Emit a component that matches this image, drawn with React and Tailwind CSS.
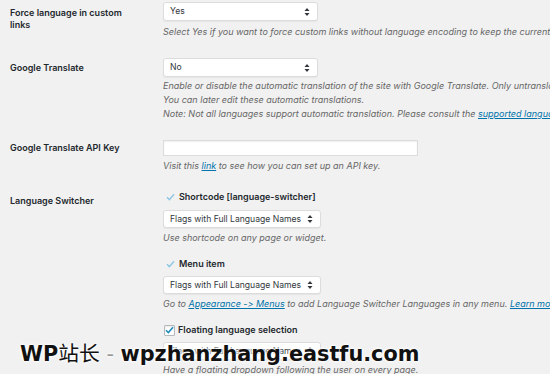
import React from "react";

const font = { fontFamily: "Inter, 'Liberation Sans', sans-serif", fontFeatureSettings: "'calt' 0" };

function Arrows() {
  return (
    <svg width="6" height="9" viewBox="0 0 6 9" className="absolute right-[7px] top-1/2 -translate-y-1/2">
      <path d="M0.5 3.5 L3 0.5 L5.5 3.5 Z" fill="#32373c" />
      <path d="M0.5 5.5 L3 8.5 L5.5 5.5 Z" fill="#32373c" />
    </svg>
  );
}

function Select({ value, width, height = "h-[19px]" }) {
  return (
    <div
      className={`relative ${width} ${height} bg-white border border-[#dcdcdc] rounded-[3px] shadow-[0_1px_1px_rgba(0,0,0,0.05)] flex items-center pl-[6px] text-[8.6px] text-[#32373c]`}
    >
      {value}
      <Arrows />
    </div>
  );
}

function Desc({ children, className = "" }) {
  return <p className={`text-[9px] leading-[14px] italic text-[#666] whitespace-nowrap ${className}`}>{children}</p>;
}

function Link({ children }) {
  return <span className="text-[#0073aa] underline">{children}</span>;
}

function LightCheck() {
  return (
    <span className="w-[11px] h-[11px] flex items-center justify-center">
      <svg width="9" height="8" viewBox="0 0 9 8">
        <path d="M1 4.2 L3.4 6.6 L8 1.2" fill="none" stroke="#8ec6e6" strokeWidth="1.4" />
      </svg>
    </span>
  );
}

function BoxCheck() {
  return (
    <span className="w-[11px] h-[11px] border border-[#b4b9be] bg-white rounded-[1px] flex items-center justify-center shadow-[inset_0_1px_2px_rgba(0,0,0,0.1)]">
      <svg width="9" height="8" viewBox="0 0 9 8">
        <path d="M1 4.2 L3.4 6.6 L8 1.2" fill="none" stroke="#1e8cbe" strokeWidth="1.6" />
      </svg>
    </span>
  );
}

function Label({ children, className = "" }) {
  return <div className={`w-[163px] shrink-0 pl-[10px] text-[9px] font-semibold text-[#23282d] ${className}`}>{children}</div>;
}

export default function App() {
  return (
    <div className="relative w-[550px] h-[374px] overflow-hidden bg-[#f1f1f1]" style={font}>
      {/* Force language */}
      <div className="flex pt-[2px]">
        <Label className="pt-[5px] leading-[12px]">
          Force language in custom
          <br />
          links
        </Label>
        <div>
          <Select value="Yes" width="w-[155px]" />
          <Desc className="mt-[4px]">
            Select Yes if you want to force custom links without language encoding to keep the currently
          </Desc>
        </div>
      </div>

      {/* Google Translate */}
      <div className="flex mt-[19px]">
        <Label className="leading-[19px]">Google Translate</Label>
        <div>
          <Select value="No" width="w-[155px]" />
          <div className="mt-[2px]">
            <Desc>Enable or disable the automatic translation of the site with Google Translate. Only untranslated strings</Desc>
            <Desc>You can later edit these automatic translations.</Desc>
            <Desc>
              Note: Not all languages support automatic translation. Please consult the <Link>supported languages</Link>
            </Desc>
          </div>
        </div>
      </div>

      {/* API key */}
      <div className="flex mt-[19px]">
        <Label className="leading-[16px]">Google Translate API Key</Label>
        <div>
          <div className="w-[255px] h-[16px] bg-white border border-[#dcdcdc] shadow-[inset_0_1px_2px_rgba(0,0,0,0.07)]" />
          <Desc className="mt-[3px]">
            Visit this <Link>link</Link> to see how you can set up an API key.
          </Desc>
        </div>
      </div>

      {/* Language switcher */}
      <div className="flex mt-[17px]">
        <Label className="pt-[4px] leading-[14px]">Language Switcher</Label>
        <div>
          <div className="flex items-center gap-[3px] h-[14px] pl-[2px] text-[9px] font-semibold text-[#23282d]">
            <LightCheck />
            Shortcode [language-switcher]
          </div>
          <div className="mt-[6px]">
            <Select value="Flags with Full Language Names" width="w-[158px]" height="h-[18px]" />
          </div>
          <Desc className="mt-[3px]">Use shortcode on any page or widget.</Desc>

          <div className="flex items-center gap-[3px] h-[14px] pl-[2px] mt-[12px] text-[9px] font-semibold text-[#23282d]">
            <LightCheck />
            Menu item
          </div>
          <div className="mt-[5px]">
            <Select value="Flags with Full Language Names" width="w-[158px]" height="h-[18px]" />
          </div>
          <Desc className="mt-[3px]">
            Go to <Link>Appearance -&gt; Menus</Link> to add Language Switcher Languages in any menu. <Link>Learn more</Link>
          </Desc>

          <div className="flex items-center gap-[3px] h-[14px] pl-[1px] mt-[12px] text-[9px] font-semibold text-[#23282d]">
            <BoxCheck />
            Floating language selection
          </div>
          <div className="mt-[5px]">
            <Select value="Flags with Full Language Names" width="w-[158px]" height="h-[18px]" />
          </div>
          <Desc className="mt-[3px]">Have a floating dropdown following the user on every page.</Desc>
        </div>
      </div>

      {/* watermark */}
      <div
        className="absolute left-[20px] top-[338px] text-[20.8px] leading-[28px] font-bold text-[#111] whitespace-nowrap [text-shadow:0_0_2px_#fff,0_0_3px_#fff,0_0_4px_#fff]"
        style={{ fontFamily: "'DejaVu Sans', 'Noto Sans CJK SC', sans-serif" }}
      >
        WP<span className="font-normal" style={{ fontFamily: "'Noto Sans CJK SC', sans-serif" }}>站长</span>
        <span className="font-normal text-[#999]"> - </span>wpzhanzhang.eastfu.com
      </div>
    </div>
  );
}
